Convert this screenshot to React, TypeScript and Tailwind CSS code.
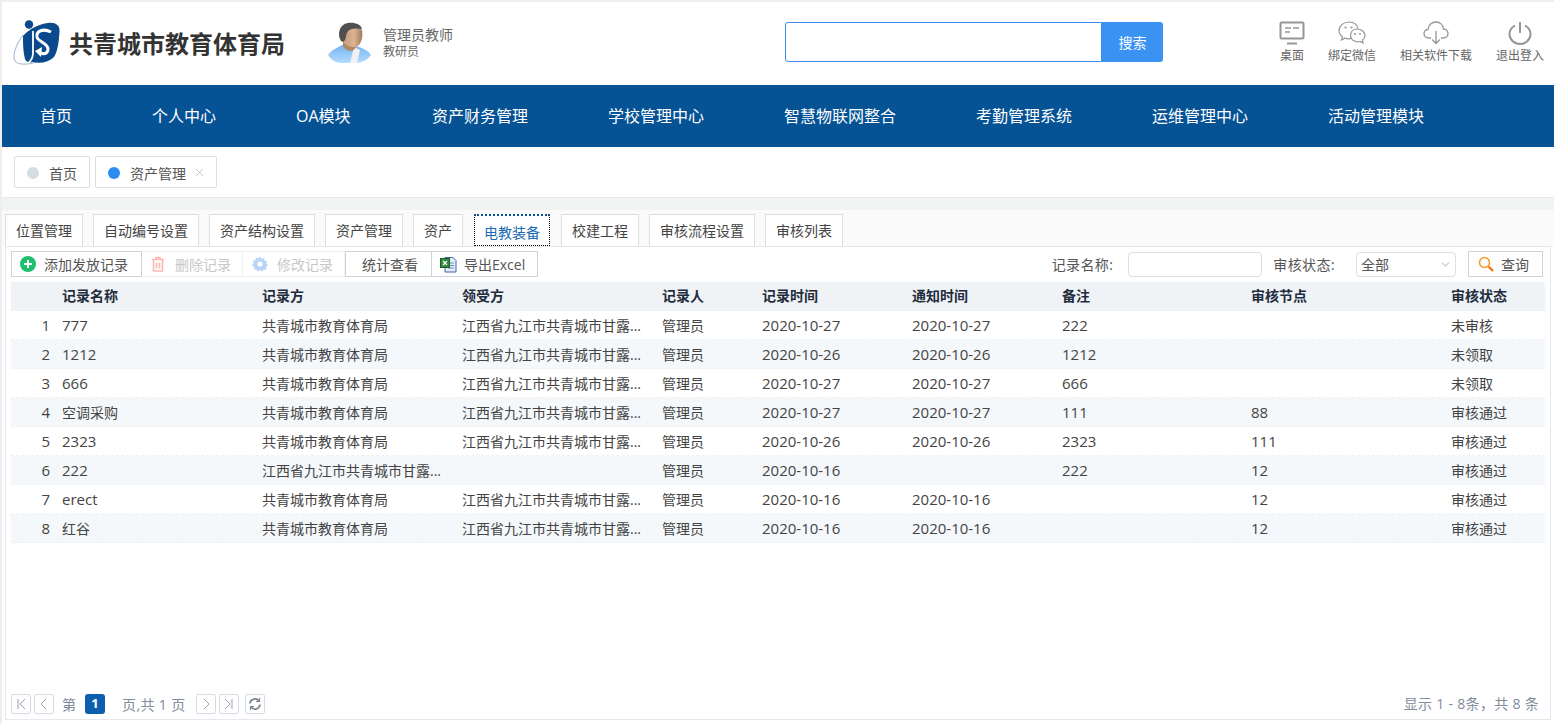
import React from 'react'
import { ChevronDown, X } from 'lucide-react'

const font = "font-['Open_Sans','Noto_Sans_CJK_SC',sans-serif]"

const navItems = ['首页', '个人中心', 'OA模块', '资产财务管理', '学校管理中心', '智慧物联网整合', '考勤管理系统', '运维管理中心', '活动管理模块']
const subTabs = ['位置管理', '自动编号设置', '资产结构设置', '资产管理', '资产', '电教装备', '校建工程', '审核流程设置', '审核列表']
const cols = ['记录名称', '记录方', '领受方', '记录人', '记录时间', '通知时间', '备注', '审核节点', '审核状态']

const owner = '共青城市教育体育局'
const place = '江西省九江市共青城市甘露...'
const rows = [
  ['777', owner, place, '管理员', '2020-10-27', '2020-10-27', '222', '', '未审核'],
  ['1212', owner, place, '管理员', '2020-10-26', '2020-10-26', '1212', '', '未领取'],
  ['666', owner, place, '管理员', '2020-10-27', '2020-10-27', '666', '', '未领取'],
  ['空调采购', owner, place, '管理员', '2020-10-27', '2020-10-27', '111', '88', '审核通过'],
  ['2323', owner, place, '管理员', '2020-10-26', '2020-10-26', '2323', '111', '审核通过'],
  ['222', place, '', '管理员', '2020-10-16', '', '222', '12', '审核通过'],
  ['erect', owner, place, '管理员', '2020-10-16', '2020-10-16', '', '12', '审核通过'],
  ['红谷', owner, place, '管理员', '2020-10-16', '2020-10-16', '', '12', '审核通过'],
]

const gridCols = 'grid grid-cols-[51px_200px_200px_200px_100px_150px_150px_189px_200px_94px]'

const Logo = () => (
  <svg width="48" height="48" viewBox="0 0 48 48">
    <path d="M10 17 C3 26 -1 38 2 43 C5 47 14 47 24 44" fill="none" stroke="#8fa9c8" strokeWidth="0.9" />
    <circle cx="16" cy="6.5" r="4.2" fill="#0a4a8c" />
    <path d="M10 18 C16 11 26 6 35 5 C42 4 47 7 46.5 13 C46 22 45 33 41 39 C36 44 28 46 20 44 C16 45 13 44 12 41 C10 34 10 26 10 18 Z" fill="#0a4a8c" />
    <path d="M20 13 V35 C20 40 18 43 15 45" fill="none" stroke="#fff" strokeWidth="1.8" />
    <path d="M38 14 C30 10 23 13 24 19 C25 24 35 25 35 31 C35 36 30 37 26 34" fill="none" stroke="#fff" strokeWidth="3" />
    <path d="M29 29 L22 33 L28 39 Z" fill="#fff" />
  </svg>
)

const Avatar = () => (
  <svg width="44" height="42" viewBox="0 0 44 42">
    <defs>
      <linearGradient id="bodyGrad" x1="0" y1="0" x2="0" y2="1">
        <stop offset="0" stopColor="#6fb2ef" />
        <stop offset="1" stopColor="#b5dcff" />
      </linearGradient>
      <linearGradient id="faceGrad" x1="0" y1="0" x2="1" y2="0">
        <stop offset="0" stopColor="#c49a76" />
        <stop offset="0.6" stopColor="#dcb492" />
        <stop offset="1" stopColor="#a07a5b" />
      </linearGradient>
    </defs>
    <path d="M0 33 C4 27 11 25 16 22 L28 24 C34 26 40 28 43 33 C40 38 33 41 27 41 L13 41 C8 41 3 38 0 33 Z" fill="url(#bodyGrad)" />
    <path d="M26 25 L32 28 L29 41 L22 41 Z" fill="#f1f1f1" />
    <path d="M15 19 L15 24 C19 30 25 31 28 25 L27 19 Z" fill="#b08863" />
    <path d="M14 8 C20 3 30 4 34 8 C35 14 34 20 30 24 C26 26 20 25 16 21 C14 17 14 12 14 8 Z" fill="url(#faceGrad)" />
    <path d="M13 19 C9 13 11 2 20 1 C26 0 33 2 34 7 C28 6 23 6 20 9 C18 12 18 15 17 18 L15 20 Z" fill="#4f4f4f" />
  </svg>
)

const DeskIcon = () => (
  <svg width="26" height="24" viewBox="0 0 26 24" fill="none" stroke="#969696">
    <rect x="1.5" y="1.5" width="23" height="16" rx="1" strokeWidth="2" />
    <path d="M6 7h6M14 7h6M6 11h5" strokeWidth="1.3" />
    <path d="M8 22.5h10" strokeWidth="2" />
  </svg>
)
const WechatIcon = () => (
  <svg width="28" height="24" viewBox="0 0 28 24" fill="none" stroke="#969696" strokeWidth="1.2">
    <path d="M14 17 C12 18 9 18 7 17 L3.5 19 L4.5 15.5 C2 14 1 11.5 1 9.5 C1 4.5 6 1 11 1 C15.5 1 19 3.5 20 7.5" />
    <path d="M19 8 C23.5 8 27 11 27 14.5 C27 16.5 26 18 24.5 19 L25 22 L22 20.5 C18 21.5 13 19.5 12.5 15 C12.5 11 15 8 19 8 Z" />
    <circle cx="7.5" cy="6.5" r="1.1" fill="#969696" stroke="none" />
    <circle cx="13.5" cy="6.5" r="1.1" fill="#969696" stroke="none" />
    <circle cx="17" cy="13" r="1" fill="#969696" stroke="none" />
    <circle cx="22" cy="13" r="1" fill="#969696" stroke="none" />
  </svg>
)
const CloudIcon = () => (
  <svg width="26" height="24" viewBox="0 0 26 24" fill="none" stroke="#969696" strokeWidth="1.3">
    <path d="M8 17 H6 C3 17 1 15 1 12.5 C1 10 3 8.5 5 8.5 C5.5 4 9 1 13 1 C17 1 20 4 20.5 8 C23 8 25 10 25 12.5 C25 15 23 17 20 17 H18" />
    <path d="M13 10 V22.5 M9 18.5 L13 22.5 L17 18.5" />
  </svg>
)
const PowerIcon = () => (
  <svg width="24" height="24" viewBox="0 0 24 24" fill="none" stroke="#969696" strokeWidth="2">
    <path d="M7 4.5 C3.5 6.5 1.5 9.5 1.5 13 C1.5 18.5 6 23 12 23 C18 23 22.5 18.5 22.5 13 C22.5 9.5 20.5 6.5 17 4.5" />
    <path d="M12 1 V12" />
  </svg>
)

const PlusIcon = () => (
  <svg width="16" height="16" viewBox="0 0 16 16">
    <circle cx="8" cy="8" r="8" fill="#1cc06a" />
    <path d="M8 4v8M4 8h8" stroke="#fff" strokeWidth="2" />
  </svg>
)
const TrashIcon = () => (
  <svg width="14" height="16" viewBox="0 0 14 16" fill="none" stroke="#fbb9b0" strokeWidth="1.6">
    <path d="M1 3.5h12M5 3V1.5h4V3M2.5 4v11h9V4M5.5 6.5v6M8.5 6.5v6" />
  </svg>
)
const GearIcon = () => (
  <svg width="16" height="16" viewBox="0 0 16 16">
    <path d="M8 0.5l1.5 2.2 2.6-.7.4 2.6 2.6.5-.8 2.5 1.7 1.9-2 1.6.2 2.6-2.6.1L10 15.5 8 14l-2 1.5-1.6-2.1-2.6-.1.2-2.6-2-1.6 1.7-1.9-.8-2.5 2.6-.5.4-2.6 2.6.7z" fill="#b8d4f8" />
    <circle cx="8" cy="8" r="2.6" fill="#fff" />
  </svg>
)
const ExcelIcon = () => (
  <svg width="17" height="17" viewBox="0 0 17 17">
    <path d="M5 1.5h8l3 3v11.5H5z" fill="#e4ecf7" stroke="#3f6aa5" />
    <path d="M8 7h6M8 9.5h6M8 12h6" stroke="#6d8fc0" />
    <rect x="0.5" y="2.5" width="9" height="9" fill="#2f8a3c" stroke="#1d5e27" />
    <path d="M3 5l4 4M7 5l-4 4" stroke="#fff" strokeWidth="1.2" />
  </svg>
)
const SearchIcon = () => (
  <svg width="16" height="16" viewBox="0 0 16 16" fill="none">
    <circle cx="6.5" cy="6.5" r="5" stroke="#f59a23" strokeWidth="1.5" />
    <path d="M10.5 10.5L15 15" stroke="#ec7a0f" strokeWidth="2.4" />
  </svg>
)

const PageBtn = ({ children }: { children: React.ReactNode }) => (
  <div className="w-[20px] h-[20px] border border-[#d5dce4] rounded-[2px] flex items-center justify-center">{children}</div>
)

const Chev = ({ d }: { d: string }) => (
  <svg width="12" height="14" viewBox="0 0 12 14" fill="none" stroke="#9aa3ad" strokeWidth="1">
    <path d={d} />
  </svg>
)

const HeadLink = ({ icon, label, className }: { icon: React.ReactNode; label: string; className: string }) => (
  <div className={`flex flex-col items-center ${className}`}>
    <div className="h-[26px] flex items-center">{icon}</div>
    <span className="text-[12px] leading-[16px] mt-[2px] text-[#666]">{label}</span>
  </div>
)

const isLatin = (v: string) => /^[\x00-\x7f]+$/.test(v)

export default function App() {
  return (
    <div className={`${font} w-[1554px] h-[724px] overflow-hidden bg-white flex flex-col border-t-2 border-l-2 border-[#eee]`}>
      {/* header */}
      <div className="h-[83px] shrink-0 flex items-start">
        <div className="mt-[16px] ml-[11px]"><Logo /></div>
        <div className="ml-[8px] mt-[24px] text-[24px] leading-[36px] font-bold text-[#333] w-[216px] whitespace-nowrap">共青城市教育体育局</div>
        <div className="ml-[43px] mt-[20px]"><Avatar /></div>
        <div className="ml-[11px] mt-[25px] w-[70px] text-[#666]">
          <div className="text-[14px] leading-[16px]">管理员教师</div>
          <div className="text-[12px] leading-[16px] mt-[1px]">教研员</div>
        </div>
        <div className="ml-[332px] mt-[20px] flex h-[40px] w-[378px]">
          <input className="w-[317px] h-full border border-[#3d8de8] rounded-l-[3px] outline-none" />
          <button className="w-[61px] h-full bg-[#3a93f2] text-white text-[14px] rounded-r-[3px]">搜索</button>
        </div>
        <div className="ml-[117px] mt-[18px] flex">
          <HeadLink icon={<DeskIcon />} label="桌面" className="w-[24px]" />
          <HeadLink icon={<WechatIcon />} label="绑定微信" className="w-[48px] ml-[24px]" />
          <HeadLink icon={<CloudIcon />} label="相关软件下载" className="w-[72px] ml-[24px]" />
          <HeadLink icon={<PowerIcon />} label="退出登入" className="w-[48px] ml-[24px]" />
        </div>
      </div>

      {/* nav */}
      <div className="h-[62px] shrink-0 bg-[#055295] flex items-center pl-[38px] gap-[80px] text-white text-[16px]">
        {navItems.map((n) => <span key={n} className={`whitespace-nowrap ${n === 'OA模块' ? 'w-[56px]' : ''}`}>{n}</span>)}
      </div>

      {/* open pages */}
      <div className="h-[50px] shrink-0 flex items-start pt-[9px] pl-[12px] gap-[5px] text-[14px] text-[#555]">
        <div className="h-[32px] w-[76px] border border-[#d7dfe8] rounded-[2px] flex items-center pl-[12px]">
          <span className="w-[12px] h-[12px] mt-[1px] rounded-full bg-[#d3dde6]" />
          <span className="ml-[10px] pt-[2px]">首页</span>
        </div>
        <div className="h-[32px] w-[122px] border border-[#d7dfe8] rounded-[2px] flex items-center pl-[12px]">
          <span className="w-[12px] h-[12px] mt-[1px] rounded-full bg-[#2d8cf0]" />
          <span className="ml-[10px] pt-[2px]">资产管理</span>
          <X size={13} strokeWidth={1.3} className="ml-[7px] mt-[1px] text-[#b5b5b5]" />
        </div>
      </div>

      <div className="h-[13px] shrink-0 bg-[#f2f3f3] border-t border-[#e8e8e8]" />

      {/* sub tabs */}
      <div className="h-[36px] shrink-0 flex items-end pl-[3px] gap-[10px] bg-[#fafafa] text-[14px] text-[#444]">
        {subTabs.map((t) => (
          t === '电教装备' ? (
            <div key={t} className="h-[32px] mx-[1px] px-[9px] bg-white border border-dotted border-black border-t-2 border-t-[#055295] flex items-center pt-[3px] text-[#1a6ab5] whitespace-nowrap">{t}</div>
          ) : (
            <div key={t} className="h-[32px] px-[10px] bg-white border border-b-0 border-[#ddd] flex items-center whitespace-nowrap">{t}</div>
          )
        ))}
      </div>

      {/* panel */}
      <div className="ml-[3px] w-[1546px] h-[474px] shrink-0 border border-[#e4e7ed] bg-white flex flex-col">
        <div className="h-[35px] shrink-0 flex items-start pt-[4px] pl-[5px] pr-[7px] text-[14px] text-[#555]">
          <div className="flex h-[26px]">
            <div className="w-[131px] border border-[#cfd3d9] flex items-center pl-[8px] gap-[8px]"><PlusIcon />添加发放记录</div>
            <div className="w-[101px] border-r border-y border-[#f1f1f1] flex items-center pl-[9px] gap-[10px] text-[#c8c8c8]"><TrashIcon />删除记录</div>
            <div className="w-[102px] border-r border-y border-[#f1f1f1] flex items-center pl-[9px] gap-[9px] text-[#c8c8c8]"><GearIcon />修改记录</div>
            <div className="w-[87px] border border-[#cfd3d9] flex items-center pl-[16px]">统计查看</div>
            <div className="w-[106px] border-r border-y border-[#cfd3d9] flex items-center pl-[8px] gap-[7px]"><ExcelIcon />导出Excel</div>
          </div>
          <div className="ml-auto flex items-center h-[26px]">
            <span className="tracking-[0.4px]">记录名称:</span>
            <input className="ml-[15px] w-[134px] h-[25px] border border-[#dcdee2] rounded-[4px] outline-none" />
            <span className="ml-[11px] tracking-[0.4px]">审核状态:</span>
            <div className="ml-[21px] w-[100px] h-[25px] border border-[#dcdee2] rounded-[4px] flex items-center justify-between pl-[4px] pr-[3px]">
              全部<ChevronDown size={13} className="text-[#c5c8ce]" />
            </div>
            <div className="ml-[12px] w-[75px] h-[26px] border border-[#cfd3d9] flex items-center pl-[9px] gap-[7px]"><SearchIcon />查询</div>
          </div>
        </div>

        <div className="ml-[5px] w-[1534px]">
          <div className={`${gridCols} h-[29px] pb-[2px] items-center bg-[#f0f3f6] text-[14px] font-bold text-[#1f2d3d]`}>
            <span />
            {cols.map((c) => <span key={c}>{c}</span>)}
          </div>
          {rows.map((r, i) => (
            <div key={i} className={`${gridCols} h-[29px] items-center border-b border-dashed border-[#eef1f5] text-[14px] text-[#444] ${i % 2 ? 'bg-[#f4f8fb]' : 'bg-white'}`}>
              <span className="text-right pr-[12px] text-[15px]">{i + 1}</span>
              {r.map((v, j) => (
                <span key={j} className={`whitespace-nowrap ${isLatin(v) && !v.endsWith('...') ? 'text-[15px]' : ''}`}>{v}</span>
              ))}
            </div>
          ))}
        </div>

        <div className="mt-auto h-[26px] shrink-0 flex items-start pt-[1px] pl-[5px] pr-[11px] text-[14px] text-[#808b9c]">
          <div className="flex items-center gap-[3px] h-[20px]">
            <PageBtn><Chev d="M3 2v10M10 2L5 7l5 5" /></PageBtn>
            <PageBtn><Chev d="M8 2L3 7l5 5" /></PageBtn>
            <span className="ml-[5px]">第</span>
            <span className="ml-[6px] w-[20px] h-[20px] rounded-[3px] bg-[#0b5fae] text-white text-[13px] font-bold flex items-center justify-center">1</span>
            <span className="ml-[14px] mr-[7px] tracking-[0.4px]">页,共 1 页</span>
            <PageBtn><Chev d="M4 2l5 5-5 5" /></PageBtn>
            <PageBtn><Chev d="M2 2l5 5-5 5M9 2v10" /></PageBtn>
            <div className="ml-[3px]">
              <PageBtn>
                <svg width="14" height="14" viewBox="0 0 14 14" fill="none" stroke="#7e8790" strokeWidth="1.8">
                  <path d="M2 6.5A5 5 0 0 1 11 4M12 7.5A5 5 0 0 1 3 10" />
                  <path d="M11.5 1v3.5H8M2.5 13V9.5H6" strokeWidth="1.2" />
                </svg>
              </PageBtn>
            </div>
          </div>
          <span className="ml-auto leading-[20px] tracking-[0.3px]">显示 1 - 8条，共 8 条</span>
        </div>
      </div>
    </div>
  )
}
